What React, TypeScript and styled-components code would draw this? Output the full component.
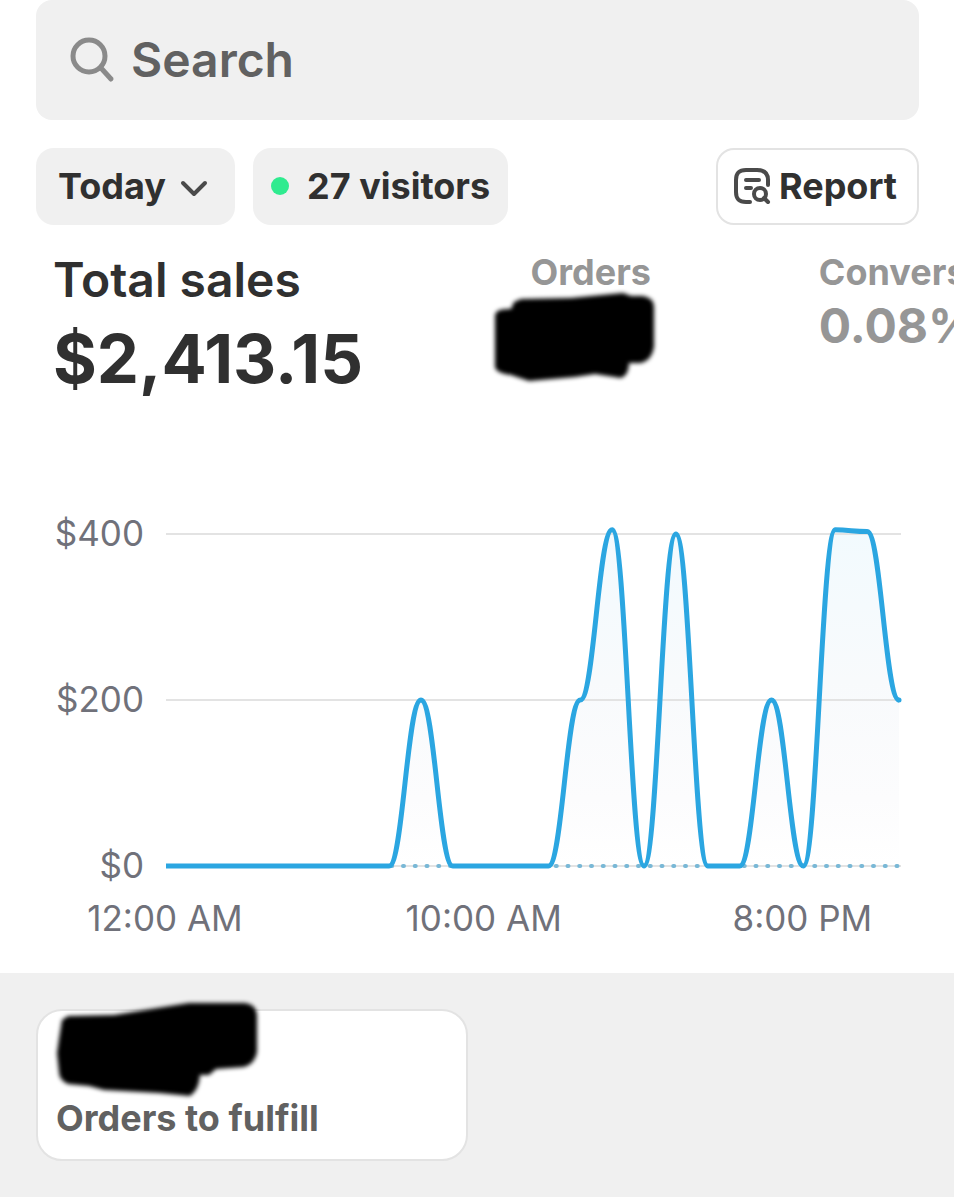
import React, { useState } from "react";

import styled, { createGlobalStyle } from "styled-components";

interface Point {
  x: number;
  y: number;
}

const hourlySales = [
  0, 0, 0, 0, 0, 0, 0, 0, 200, 0, 0, 0, 0, 200, 405, 0, 400, 0, 0, 200, 0, 405,
  403, 200,
];

const yTicks = [400, 200, 0];

const xTicks = [
  { hour: 0, label: "12:00 AM" },
  { hour: 10, label: "10:00 AM" },
  { hour: 20, label: "8:00 PM" },
];

//Chart geometry
const PLOT_LEFT = 166;
const PLOT_RIGHT = 901;
const BASELINE = 366;
const PX_PER_DOLLAR = 0.83;

const toX = (hour: number) =>
  PLOT_LEFT + (hour * (PLOT_RIGHT - 2 - PLOT_LEFT)) / (hourlySales.length - 1);
const toY = (value: number) => BASELINE - value * PX_PER_DOLLAR;

const curve = (points: Point[]) =>
  points.reduce((path, p, i) => {
    if (i === 0) return `M${p.x} ${p.y}`;
    const prev = points[i - 1];
    const reach = (p.x - prev.x) * 0.43;
    return `${path} C${prev.x + reach} ${prev.y} ${p.x - reach} ${p.y} ${p.x} ${p.y}`;
  }, "");

function SalesChart() {
  const line = curve(hourlySales.map((v, i) => ({ x: toX(i), y: toY(v) })));
  const area = `${line} V${BASELINE} H${PLOT_LEFT} Z`;

  return (
    <Chart viewBox="0 0 954 473" role="img" aria-label="Total sales by hour">
      <defs>
        <linearGradient id="area" x1="0" y1="0" x2="0" y2="1">
          <stop offset="0" stopColor="#f2fafe" />
          <stop offset="0.45" stopColor="#f8fafc" />
          <stop offset="0.8" stopColor="#fcfcfd" />
          <stop offset="1" stopColor="#ffffff" />
        </linearGradient>
      </defs>
      <path d={area} fill="url(#area)" />
      {yTicks.map((tick) => (
        <g key={tick}>
          <GridLine x1={PLOT_LEFT} x2={PLOT_RIGHT} y1={toY(tick)} y2={toY(tick)} />
          <AxisText x={144} y={toY(tick) + 12} textAnchor="end">
            ${tick}
          </AxisText>
        </g>
      ))}
      <Comparison x1={PLOT_LEFT + 2} x2={PLOT_RIGHT} y1={BASELINE} y2={BASELINE} />
      <SalesLine d={line} />
      <path d={`M${PLOT_RIGHT - 2} ${toY(200)}h0`} stroke="#2ba6e1" strokeWidth="5" strokeLinecap="round" />
      {xTicks.map((tick) => (
        <AxisText key={tick.hour} x={toX(tick.hour) - 1} y={431} textAnchor="middle">
          {tick.label}
        </AxisText>
      ))}
    </Chart>
  );
}

export default function App() {
  const [range, setRange] = useState("Today");

  return (
    <Page>
      <GlobalStyle />
      <SearchBox>
        <SearchIcon viewBox="0 0 48 48" aria-hidden="true">
          <circle cx="21" cy="20" r="16" />
          <path d="M33 32L43 43" />
        </SearchIcon>
        <SearchInput type="search" placeholder="Search" aria-label="Search" />
      </SearchBox>

      <Toolbar>
        <RangeBox>
          <RangeSelect
            aria-label="Date range"
            value={range}
            onChange={(e) => setRange(e.target.value)}
          >
            <option>Today</option>
            <option>Yesterday</option>
          </RangeSelect>
          <Chevron viewBox="0 0 28 18" aria-hidden="true">
            <path d="M3 3L14 14L25 3" />
          </Chevron>
        </RangeBox>
        <Visitors>
          <LiveDot />
          27 visitors
        </Visitors>
        <ReportButton type="button">
          <ReportIcon viewBox="0 0 38 38" aria-hidden="true">
            <path d="M17 35H13C6 35 3 32 3 25V13C3 6 6 3 13 3H24C31 3 35 6 35 13V18" />
            <path d="M13 13H26M13 21H18" />
            <circle cx="27" cy="27" r="6" />
            <path d="M31 31L35 35" />
          </ReportIcon>
          Report
        </ReportButton>
      </Toolbar>

      <Metrics>
        <Metric $basis="53%" $active>
          <MetricLabel $active>Total sales</MetricLabel>
          <MetricValue $active>$2,413.15</MetricValue>
        </Metric>
        <Metric $basis="32%">
          <MetricLabel>Orders</MetricLabel>
          <OrdersScribble viewBox="0 0 170 100" aria-hidden="true">
            <path d="M23 15L30 12L80 11L132 6L140 9H152Q163 11 163 20V60Q161 73 150 76H138Q138 88 130 91L104 87L84 90L38 94L20 88Q5 86 4 80V28Q5 21 20 22Z" />
          </OrdersScribble>
        </Metric>
        <Metric $basis="32%">
          <MetricLabel>Conversion rate</MetricLabel>
          <MetricValue>0.08%</MetricValue>
        </Metric>
      </Metrics>

      <SalesChart />

      <Tasks>
        <TaskCard href="#orders">
          <TaskScribble viewBox="0 0 210 104" aria-hidden="true">
            <path d="M8 22L14 18L60 17L135 5H191Q203 7 203 18V54Q201 66 190 69L162 71L155 77H146Q145 92 136 98L105 95L50 92L35 88L14 86Q5 82 5 74L3 55L5 41Z" />
          </TaskScribble>
          Orders to fulfill
        </TaskCard>
      </Tasks>
    </Page>
  );
}

//Styles
const GlobalStyle = createGlobalStyle`
  * {
    box-sizing: border-box;
  }
  body {
    margin: 0;
    background: #fff;
    color: #303030;
    font-family: Inter, sans-serif;
    overflow-x: hidden;
  }
  button, input, select {
    font: inherit;
    color: inherit;
  }
`;
const Page = styled.main`
  display: flex;
  flex-direction: column;
`;
const SearchBox = styled.div`
  height: 120px;
  margin: 0 35px 0 36px;
  padding: 0 32px;
  border-radius: 16px;
  background: #f0f0f0;
  display: flex;
  align-items: center;
  gap: 15px;
`;
const SearchIcon = styled.svg`
  width: 48px;
  height: 48px;
  flex: none;
  fill: none;
  stroke: #8a8a8a;
  stroke-width: 5;
  stroke-linecap: round;
`;
const SearchInput = styled.input`
  flex: 1;
  min-width: 0;
  padding: 0 0 2px;
  border: 0;
  outline: 0;
  background: transparent;
  font-size: 48px;
  font-weight: 600;

  &::placeholder {
    color: #616161;
    opacity: 1;
  }
`;
const Toolbar = styled.div`
  height: 77px;
  margin: 28px 35px 0 36px;
  display: flex;
  gap: 18px;
  font-size: 36px;
  font-weight: 650;
`;
const RangeBox = styled.div`
  width: 199px;
  border-radius: 18px;
  background: #f0f0f0;
  display: grid;
  align-items: center;
`;
const RangeSelect = styled.select`
  grid-area: 1 / 1;
  width: 100%;
  height: 100%;
  padding: 0 60px 2px 22px;
  border: 0;
  background: transparent;
  appearance: none;
`;
const Chevron = styled.svg`
  grid-area: 1 / 1;
  justify-self: end;
  width: 28px;
  height: 18px;
  margin: 4px 27px 0 0;
  fill: none;
  stroke: #4a4a4a;
  stroke-width: 4;
  stroke-linecap: round;
  stroke-linejoin: round;
  pointer-events: none;
`;
const Visitors = styled.div`
  padding: 0 18px 2px;
  border-radius: 18px;
  background: #f0f0f0;
  display: flex;
  align-items: center;
  gap: 18px;
  white-space: nowrap;
`;
const LiveDot = styled.span`
  width: 18px;
  height: 18px;
  border-radius: 50%;
  background: #2feb8f;
`;
const ReportButton = styled.button`
  margin-left: auto;
  padding: 0 20px 2px 15px;
  border: 2px solid #e3e3e3;
  border-radius: 18px;
  background: #fff;
  display: flex;
  align-items: center;
  gap: 8px;
`;
const ReportIcon = styled.svg`
  width: 38px;
  height: 38px;
  fill: none;
  stroke: #4a4a4a;
  stroke-width: 4;
  stroke-linecap: round;
  stroke-linejoin: round;
`;
const Metrics = styled.div`
  height: 275px;
  padding: 27px 0 0 53px;
  display: flex;
  overflow: hidden;
`;
const Metric = styled.button<{ $basis: string; $active?: boolean }>`
  position: relative;
  flex: 0 0 ${(props) => props.$basis};
  padding: 0;
  border: 0;
  background: transparent;
  color: ${(props) => (props.$active ? "#303030" : "#969696")};
  display: flex;
  flex-direction: column;
  align-items: flex-start;
  white-space: nowrap;
`;
const MetricLabel = styled.span<{ $active?: boolean }>`
  font-size: ${(props) => (props.$active ? "48px" : "36px")};
  font-weight: ${(props) => (props.$active ? 600 : 650)};
  line-height: ${(props) => (props.$active ? "56px" : "40px")};
`;
const MetricValue = styled.span<{ $active?: boolean }>`
  font-size: ${(props) => (props.$active ? "67px" : "48px")};
  font-weight: 700;
  line-height: ${(props) => (props.$active ? "102px" : "68px")};
`;
const Scribble = styled.svg`
  position: absolute;
  fill: #000;
  filter: blur(2px);
  overflow: visible;
`;
const OrdersScribble = styled(Scribble)`
  left: -40px;
  top: 35px;
  width: 170px;
  height: 100px;
`;
const Chart = styled.svg`
  width: 100%;
  height: auto;
  font-size: 35px;
`;
const GridLine = styled.line`
  stroke: #e3e3e3;
  stroke-width: 2;
`;
const Comparison = styled.line`
  stroke: #79b8d6;
  stroke-width: 4;
  stroke-linecap: round;
  stroke-dasharray: 1 10.75;
`;
const SalesLine = styled.path`
  fill: none;
  stroke: #2ba6e1;
  stroke-width: 5;
  stroke-linejoin: round;
`;
const AxisText = styled.text`
  fill: #70717a;
  font-weight: 400;
`;
const Tasks = styled.section`
  height: 224px;
  padding: 36px;
  background: #f0f0f0;
  display: grid;
  grid-template-columns: 1fr 1fr;
  gap: 18px;
`;
const TaskCard = styled.a`
  position: relative;
  padding: 0 18px 19px;
  border: 2px solid #e3e3e3;
  border-radius: 26px;
  background: #fff;
  color: #616161;
  font-size: 36px;
  font-weight: 650;
  line-height: 44px;
  text-decoration: none;
  display: flex;
  align-items: flex-end;
`;
const TaskScribble = styled(Scribble)`
  left: 16px;
  top: -13px;
  width: 210px;
  height: 104px;
`;
